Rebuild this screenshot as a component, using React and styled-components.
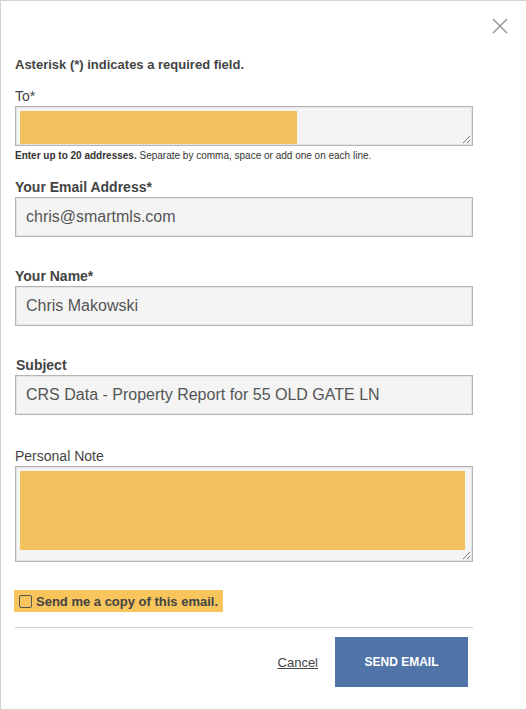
import React from "react";
import styled, { createGlobalStyle } from "styled-components";

const Global = createGlobalStyle`
  html, body { margin: 0; padding: 0; background: #fff; }
  body { font-family: "Liberation Sans", Arial, sans-serif; }
  * { box-sizing: border-box; }
`;

const Dialog = styled.div`
  width: 527px;
  height: 710px;
  border: 1px solid #d2d2d2;
  background: #fff;
  padding: 0 0 0 14px;
  display: flex;
  flex-direction: column;
  color: #444;
`;

const TopBar = styled.div`
  height: 56px;
  display: flex;
  justify-content: flex-end;
  align-items: flex-start;
  padding: 16px 18px 0 0;
`;

const CloseButton = styled.button`
  width: 17px;
  height: 17px;
  padding: 0;
  border: 0;
  background: transparent;
  display: flex;
  align-items: center;
  justify-content: center;
  cursor: pointer;
`;

const Content = styled.div`
  width: 458px;
  display: flex;
  flex-direction: column;
`;

const Intro = styled.div`
  font-size: 13px;
  line-height: 16px;
  font-weight: bold;
  margin: 0 0 15px;
`;

const Label = styled.label`
  display: block;
  font-size: 14px;
  line-height: 16px;
  font-weight: ${(p) => (p.$bold ? "bold" : "normal")};
  margin: ${(p) => p.$top || 0}px 0 2px;
  padding-left: ${(p) => (p.$indent ? 1 : 0)}px;
`;

const InputBox = styled.div`
  height: 40px;
  background: #f4f4f4;
  border: 1px solid #b4b4b4;
  box-shadow: inset 0 0 0 1px #e4e4e4;
  display: flex;
  align-items: center;
  padding: 0 0 1px 10px;
  font-size: 16px;
  color: #555;
`;

const AreaBox = styled.div`
  position: relative;
  height: ${(p) => p.$h}px;
  background: #f4f4f4;
  border: 1px solid #b4b4b4;
  box-shadow: inset 0 0 0 1px #e4e4e4;
  padding: 4px 6px 0 4px;
`;

const Redaction = styled.div`
  background: #f0c15c;
  width: ${(p) => p.$w};
  height: ${(p) => p.$h}px;
`;

const Grip = styled.svg`
  position: absolute;
  right: 1px;
  bottom: 1px;
`;

const Help = styled.div`
  font-size: 10px;
  line-height: 12px;
  margin: 4px 0 17px;
  color: #333;
  b { font-weight: bold; }
`;

const CopyRow = styled.label`
  align-self: flex-start;
  display: flex;
  align-items: center;
  gap: 4px;
  height: 22px;
  margin: 28px 0 0 -1px;
  padding: 0 5px 0 5px;
  background: #f8c55d;
  font-size: 13px;
  font-weight: bold;
  color: #444;
`;

const Box = styled.span`
  width: 13px;
  height: 13px;
  border: 1px solid #555;
  border-radius: 2px;
  background: transparent;
  display: inline-block;
`;

const Divider = styled.hr`
  border: 0;
  border-top: 1px solid #cfcfcf;
  margin: 15px 0 9px;
  width: 458px;
`;

const Actions = styled.div`
  display: flex;
  justify-content: flex-end;
  align-items: center;
  gap: 17px;
  padding-right: 5px;
`;

const CancelLink = styled.a`
  font-size: 13px;
  color: #444;
  text-decoration: underline;
  cursor: pointer;
`;

const SendButton = styled.button`
  width: 133px;
  height: 50px;
  border: 0;
  background: #5174a8;
  color: #fff;
  font-family: "Liberation Sans", Arial, sans-serif;
  font-weight: bold;
  font-size: 12px;
  padding: 0;
  cursor: pointer;
`;

function ResizeGrip() {
  return (
    <Grip width="10" height="10" viewBox="0 0 10 10">
      <path d="M9 2 L2 9 M9 6 L6 9" stroke="#777" strokeWidth="1" />
    </Grip>
  );
}

export default function App() {
  return (
    <>
      <Global />
      <Dialog>
        <TopBar>
          <CloseButton aria-label="Close">
            <svg width="16" height="16" viewBox="0 0 16 16">
              <path d="M1 1 L15 15 M15 1 L1 15" stroke="#9a9a9a" strokeWidth="1.5" />
            </svg>
          </CloseButton>
        </TopBar>
        <Content>
          <Intro>Asterisk (*) indicates a required field.</Intro>

          <Label>To*</Label>
          <AreaBox $h={40}>
            <Redaction $w="277px" $h={33} />
            <ResizeGrip />
          </AreaBox>
          <Help>
            <b>Enter up to 20 addresses.</b> Separate by comma, space or add one on each line.
          </Help>

          <Label $bold>Your Email Address*</Label>
          <InputBox>chris@smartmls.com</InputBox>

          <Label $bold $top={31}>Your Name*</Label>
          <InputBox>Chris Makowski</InputBox>

          <Label $bold $top={31} $indent>Subject</Label>
          <InputBox>CRS Data - Property Report for 55 OLD GATE LN</InputBox>

          <Label $top={33}>Personal Note</Label>
          <AreaBox $h={96}>
            <Redaction $w="445px" $h={79} />
            <ResizeGrip />
          </AreaBox>

          <CopyRow>
            <Box />
            Send me a copy of this email.
          </CopyRow>
          <Divider />
          <Actions>
            <CancelLink>Cancel</CancelLink>
            <SendButton>SEND EMAIL</SendButton>
          </Actions>
        </Content>
      </Dialog>
    </>
  );
}
